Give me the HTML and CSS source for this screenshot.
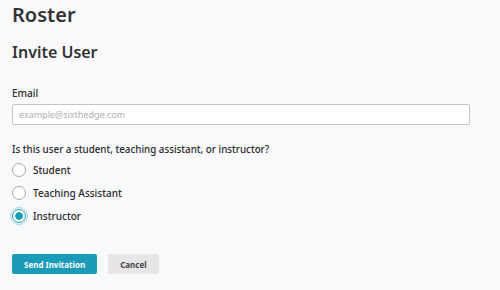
FILE: index.html
```html
<!DOCTYPE html>
<html lang="en">
<head>
    <meta charset="UTF-8">
    <title>Roster</title>
    <link rel="stylesheet" href="styles.css">
</head>
<body>

    <div class="page">
        <h1>Roster</h1>
        <h2>Invite User</h2>

        <form class="invite">
            <label class="field-label" for="email">Email</label>
            <input type="text" id="email" class="text-input" placeholder="example@sixthedge.com">

            <p class="question">Is this user a student, teaching assistant, or instructor?</p>

            <div class="options">
                <label class="option">
                    <span class="radio"></span>
                    <span>Student</span>
                </label>
                <label class="option">
                    <span class="radio"></span>
                    <span>Teaching Assistant</span>
                </label>
                <label class="option">
                    <span class="radio checked focused"></span>
                    <span>Instructor</span>
                </label>
            </div>

            <div class="actions">
                <button type="button" class="btn primary">Send Invitation</button>
                <button type="button" class="btn secondary">Cancel</button>
            </div>
        </form>
    </div>

</body>
</html>
```

FILE: styles.css
```css
* {
    margin: 0;
    padding: 0;
    box-sizing: border-box;
    font-family: "Noto Sans", "Open Sans", sans-serif;
}

body {
    background: #f9f9fc;
    color: #2b2b2b;
}

.page {
    padding: 0 12px;
    width: 470px;
}

h1 {
    font-size: 20px;
    font-weight: 600;
    line-height: 30px;
    color: #333;
}

h2 {
    font-size: 16px;
    font-weight: 600;
    line-height: 24px;
    margin-top: 10px;
    color: #333;
}

.invite {
    margin-top: 22px;
}

.field-label {
    display: block;
    font-size: 10px;
    font-weight: 500;
    line-height: 14px;
}

.text-input {
    display: block;
    width: 458px;
    height: 21px;
    margin-top: 4px;
    padding: 0 6px;
    border: 1px solid #c4c4c8;
    border-radius: 2px;
    background: #fff;
    font-size: 9px;
    color: #333;
    outline: none;
}

.text-input::placeholder {
    color: #b0b0b4;
}

.question {
    font-size: 9.8px;
    font-weight: 500;
    line-height: 14px;
    margin-top: 18px;
}

.options {
    display: flex;
    flex-direction: column;
    gap: 9px;
    margin-top: 6px;
}

.option {
    display: flex;
    align-items: center;
    gap: 7px;
    font-size: 10px;
    font-weight: 500;
    line-height: 14px;
}

.radio {
    width: 14px;
    height: 14px;
    border: 1px solid #a9a9ad;
    border-radius: 50%;
    background: #fff;
}

.radio.checked {
    border: 1px solid #1a9bb8;
    background: radial-gradient(circle, #1a9bb8 0 3.5px, #fff 4px);
}

.radio.focused {
    outline: 1.5px solid #a9d8e6;
    outline-offset: 1px;
}

.actions {
    display: flex;
    gap: 11px;
    margin-top: 31px;
}

.btn {
    height: 20px;
    padding: 0 12px;
    border: none;
    border-radius: 2px;
    font-size: 8px;
    font-weight: 700;
    cursor: pointer;
}

.primary {
    background: #1a9bb8;
    color: #fff;
}

.secondary {
    background: #e6e6e8;
    color: #444;
}
```
